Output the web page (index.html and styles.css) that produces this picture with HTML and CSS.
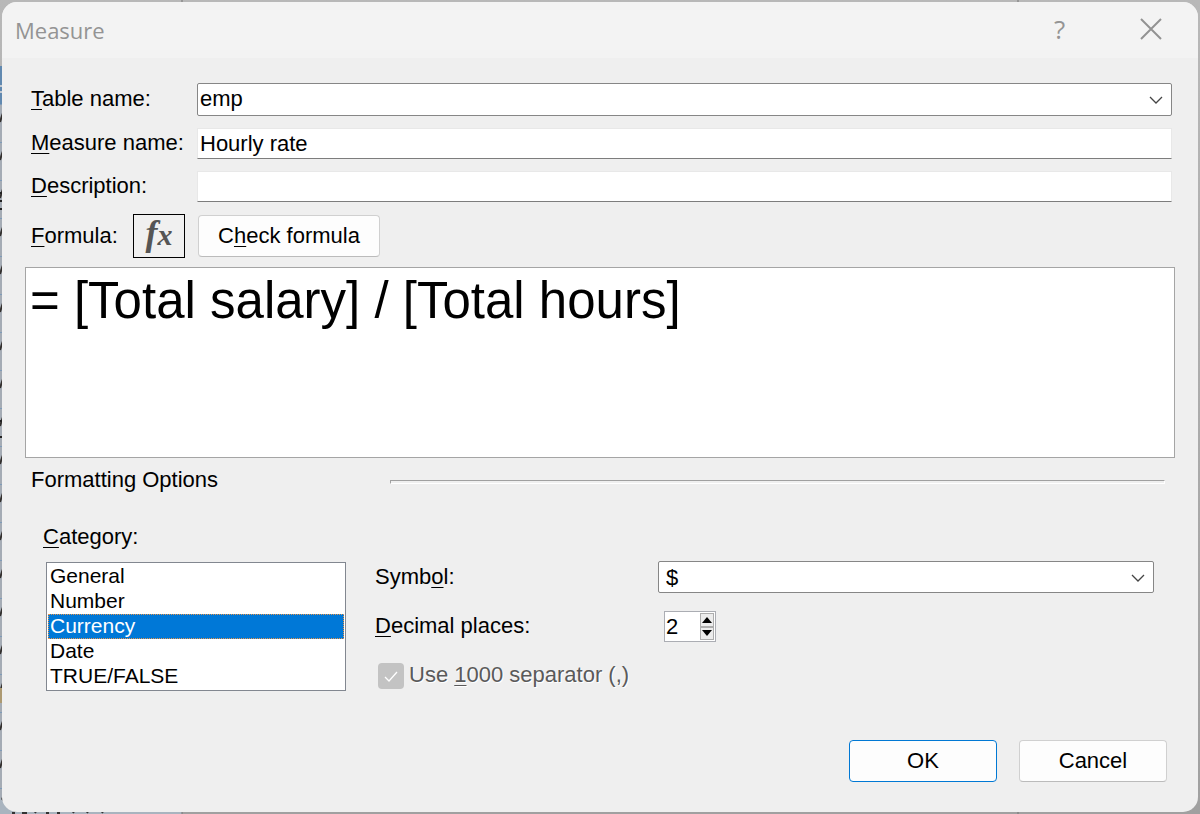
FILE: index.html
```html
<!DOCTYPE html>
<html lang="en">
<head>
    <meta charset="UTF-8">
    <meta name="viewport" content="width=device-width, initial-scale=1.0">
    <title>Measure</title>
    <link rel="stylesheet" href="styles.css">
</head>
<body>
    <!-- worksheet behind the dialog -->
    <svg class="sheet" aria-hidden="true">
        <defs>
            <pattern id="cells" width="4" height="38" y="28" patternUnits="userSpaceOnUse">
                <rect width="4" height="38" fill="#a5acb5"/>
                <path d="M0 0.5h4" stroke="#7f9bb8"/>
                <path d="M0 18L3 9" stroke="#33302e" stroke-width="2"/>
            </pattern>
        </defs>
        <rect y="66" width="4" height="748" fill="url(#cells)"/>
        <rect y="66" width="4" height="38" fill="#6189b0"/>
        <path d="M0 86h4M0 92h4" stroke="#c5cbd3" stroke-width="2"/>
        <path d="M0 193h3M0 201h3M0 209h3M0 421h3M0 437h3" stroke="#222" stroke-width="2"/>
        <rect y="688" width="2" height="15" fill="#ad9a72"/>
        <path d="M0 798v16h182v-2H14z" fill="#a9b4bf"/>
        <path d="M12 813h3M22 813h5M35 813l1-2M46 813h3M57 813h3M73 813l1-2M87 813l1-2M102 813l1-2" stroke="#333" stroke-width="2"/>
        <path d="M182 0v2M1018 0v2M182 812v2M1018 812v2" stroke="#777"/>
    </svg>

    <form class="dialog" id="measureForm">
        <div class="title-bar">
            <h1>Measure</h1>
            <button type="button" class="title-button" aria-label="Help">?</button>
            <button type="button" class="title-button" aria-label="Close">
                <svg width="22" height="22" viewBox="0 0 22 22"><path d="M1 1l20 20M21 1L1 21" stroke="#929292" stroke-width="2" fill="none"/></svg>
            </button>
        </div>

        <div class="content">
            <div class="fields">
                <label for="tableName"><u>T</u>able name:</label>
                <div class="combo">
                    <select id="tableName"><option>emp</option></select>
                    <svg class="arrow" width="14" height="8" viewBox="0 0 14 8"><path d="M1 1l6 6 6-6" stroke="#444" stroke-width="1.3" fill="none"/></svg>
                </div>
                <label for="measureName"><u>M</u>easure name:</label>
                <input type="text" id="measureName" value="Hourly rate">
                <label for="description"><u>D</u>escription:</label>
                <input type="text" id="description">
            </div>

            <div class="formula-bar">
                <label for="formula"><u>F</u>ormula:</label>
                <button type="button" class="fx-button" aria-label="Insert function"><span class="fx-f">f</span><span class="fx-x">x</span></button>
                <button type="button" class="button check-button">C<u>h</u>eck formula</button>
            </div>
            <textarea id="formula" spellcheck="false">= [Total salary] / [Total hours]</textarea>

            <div class="section-title">
                <h2>Formatting Options</h2>
                <div class="rule"></div>
            </div>

            <div class="formatting">
                <div class="category">
                    <label for="category"><u>C</u>ategory:</label>
                    <select id="category" size="5">
                        <option>General</option>
                        <option>Number</option>
                        <option selected>Currency</option>
                        <option>Date</option>
                        <option>TRUE/FALSE</option>
                    </select>
                </div>
                <div class="options">
                    <div class="option-row">
                        <label for="symbol">Symb<u>o</u>l:</label>
                        <div class="combo symbol">
                            <select id="symbol"><option>$</option></select>
                            <svg class="arrow" width="14" height="8" viewBox="0 0 14 8"><path d="M1 1l6 6 6-6" stroke="#444" stroke-width="1.3" fill="none"/></svg>
                        </div>
                    </div>
                    <div class="option-row">
                        <label for="decimals"><u>D</u>ecimal places:</label>
                        <div class="spinner">
                            <input type="number" id="decimals" value="2" min="0">
                            <div class="spin-buttons">
                                <button type="button" aria-label="More" onclick="decimals.stepUp()"><svg width="10" height="6" viewBox="0 0 10 6"><path d="M0 6l5-6 5 6z"/></svg></button>
                                <button type="button" aria-label="Less" onclick="decimals.stepDown()"><svg width="10" height="6" viewBox="0 0 10 6"><path d="M0 0l5 6 5-6z"/></svg></button>
                            </div>
                        </div>
                    </div>
                    <div class="check-row">
                        <span class="check">
                            <input type="checkbox" id="separator" checked disabled>
                            <svg width="14" height="11" viewBox="0 0 14 11"><path d="M1 6l4 4 8-9" stroke="#fff" stroke-width="1.3" fill="none"/></svg>
                        </span>
                        <label for="separator">Use <u>1</u>000 separator (,)</label>
                    </div>
                </div>
            </div>

            <div class="actions">
                <button type="button" class="button default">OK</button>
                <button type="button" class="button">Cancel</button>
            </div>
        </div>
    </form>
</body>
</html>
```
FILE: styles.css
```css
* {
    box-sizing: border-box;
}

body {
    margin: 0;
    padding: 2px;
    min-height: 100vh;
    display: flex;
    background: linear-gradient(#b8b8b8, #a0a0a0);
    font-family: "Liberation Sans", Arial, sans-serif;
    font-size: 22px;
    line-height: 25px;
    color: #000;
}

button, input, select, textarea {
    font: inherit;
    color: inherit;
    margin: 0;
    padding: 0;
    border-radius: 0;
    outline: none;
}

label {
    padding-bottom: 2px;
}

u {
    text-decoration-thickness: 1px;
    text-underline-offset: 3px;
    text-decoration-skip-ink: none;
}

/* backdrop, seen only round the edge of the dialog */
.sheet {
    position: absolute;
    top: 0;
    left: 0;
    width: 100%;
    height: 100%;
}

.dialog {
    position: relative;
    flex: 1;
    display: flex;
    flex-direction: column;
    background: #efefef;
    border-radius: 15px;
    overflow: hidden;
}

/* title bar */
.title-bar {
    display: flex;
    align-items: center;
    height: 56px;
    padding: 0 2px 2px 13px;
    background: #f3f3f3;
    color: #949494;
}

.title-bar h1 {
    flex: 1;
    margin: 0;
    padding-top: 2px;
    font: 22px/30px "Open Sans", "Noto Sans", sans-serif;
}

.title-button {
    display: flex;
    align-items: center;
    justify-content: center;
    width: 91px;
    height: 46px;
    border: 0;
    background: none;
    font: 500 26px/30px "Open Sans", "Noto Sans", sans-serif;
}

.content {
    flex: 1;
    display: flex;
    flex-direction: column;
    padding: 25px 23px 30px;
}

/* name fields */
.fields {
    display: grid;
    grid-template-columns: 166px 1fr;
    row-gap: 12px;
    align-items: center;
    padding: 0 3px 0 6px;
}

.fields input {
    height: 31px;
    padding: 0 2px;
    border: 1px solid #e8e8e8;
    border-bottom-color: #7d7d7d;
    background: #fff;
}

.combo {
    position: relative;
    display: flex;
}

.combo select {
    appearance: none;
    width: 100%;
    height: 33px;
    padding: 0 40px 2px 2px;
    border: 1px solid #868686;
    border-radius: 2px;
    background: #fff;
}

.combo .arrow {
    position: absolute;
    right: 9px;
    top: 13px;
    pointer-events: none;
}

/* formula */
.formula-bar {
    display: flex;
    align-items: center;
    margin-top: 12px;
    padding-left: 6px;
}

.formula-bar label {
    width: 102px;
}

.fx-button {
    width: 52px;
    height: 44px;
    padding-bottom: 2px;
    border: 1px solid #000;
    background: #f0f0f0;
    color: #555;
    font-family: "Liberation Serif", serif;
    font-style: italic;
    font-weight: bold;
}

.fx-f {
    font-size: 36px;
}

.fx-x {
    font-size: 30px;
}

.button {
    width: 148px;
    height: 42px;
    padding-bottom: 2px;
    border: 1px solid #d0d0d0;
    border-bottom-color: #bbb;
    border-radius: 4px;
    background: #fdfdfd;
}

.button.default {
    border-color: #0078d4;
}

.check-button {
    width: 182px;
    margin-left: 13px;
}

#formula {
    display: block;
    width: 100%;
    height: 191px;
    margin-top: 9px;
    padding: 4px;
    border: 1px solid #a5a5a5;
    background: #fff;
    font-size: 51px;
    line-height: 58px;
    resize: none;
}

/* formatting options */
.section-title {
    display: flex;
    align-items: flex-end;
    margin-top: 9px;
    padding: 0 10px 0 6px;
}

.section-title h2 {
    width: 359px;
    margin: 0;
    font-size: 22px;
    font-weight: normal;
}

.rule {
    flex: 1;
    height: 4px;
    margin-bottom: 8px;
    border: 1px solid #fff;
    border-top-color: #a0a0a0;
    border-left-color: #a0a0a0;
}

.formatting {
    display: flex;
    align-items: flex-end;
    gap: 29px;
    margin-top: 32px;
    padding: 0 21px;
}

.category {
    display: flex;
    flex-direction: column;
    gap: 11px;
    width: 300px;
}

.category label {
    margin-left: -3px;
}

.category select {
    height: 129px;
    padding: 1px;
    border: 1px solid #828790;
    background: #fff;
    font-size: 21px;
    overflow: hidden;
}

.category option {
    height: 25px;
    min-height: 25px;
    padding: 0 2px;
    line-height: 25px;
}

.category option:checked {
    background: linear-gradient(#0078d7, #0078d7);
    color: #fff;
    outline: 1px dotted #e8954a;
    outline-offset: -1px;
}

.options {
    flex: 1;
    display: flex;
    flex-direction: column;
    gap: 18px;
}

.option-row {
    display: flex;
    align-items: center;
}

.option-row label {
    width: 283px;
}

.symbol {
    flex: 1;
}

.symbol select {
    height: 32px;
    padding: 0 40px 0 7px;
}

.spinner {
    display: flex;
    width: 52px;
    height: 31px;
    margin-left: 6px;
    padding: 1px;
    border: 1px solid #abadb3;
    background: #fff;
}

.spinner input {
    appearance: textfield;
    flex: 1;
    min-width: 0;
    border: 0;
    background: none;
}

.spinner input::-webkit-inner-spin-button {
    display: none;
}

.spin-buttons {
    display: flex;
    flex-direction: column;
    width: 14px;
}

.spin-buttons button {
    flex: 1;
    display: flex;
    align-items: center;
    justify-content: center;
    border: 1px solid #adadad;
    background: #ececec;
}

.check-row {
    display: flex;
    align-items: center;
    gap: 5px;
    padding: 2px 0 2px 3px;
    color: #5a5a5a;
    text-shadow: 1px 1px #fff;
}

.check {
    position: relative;
    display: flex;
}

.check input {
    appearance: none;
    width: 26px;
    height: 26px;
    border-radius: 4px;
    background: #c3c3c3;
}

.check svg {
    position: absolute;
    left: 6px;
    top: 8px;
}

.actions {
    display: flex;
    justify-content: flex-end;
    gap: 22px;
    margin-top: auto;
    padding-right: 8px;
}
```
